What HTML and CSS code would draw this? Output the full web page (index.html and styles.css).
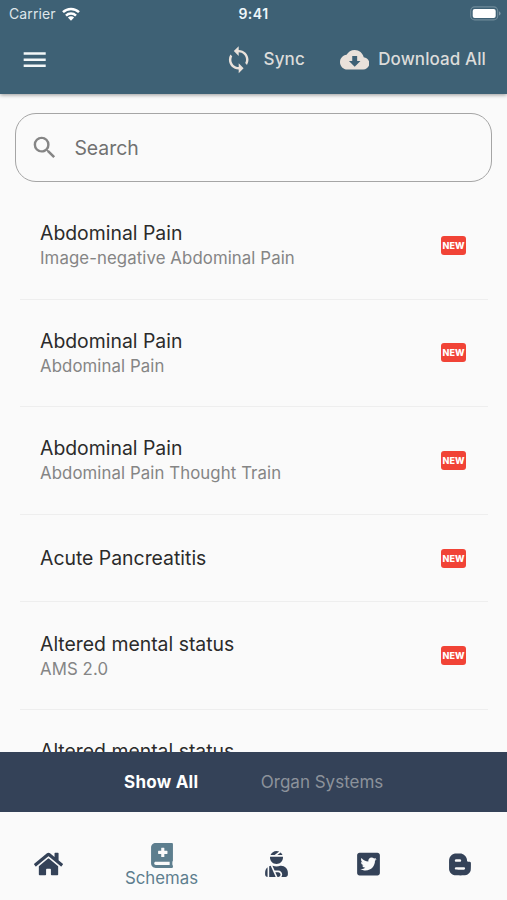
FILE: index.html
```html
<!DOCTYPE html>
<html lang="en">
<head>
<meta charset="utf-8">
<title>Schemas</title>
<link rel="stylesheet" href="styles.css">
</head>
<body>
<div class="app">
  <header class="header">
    <div class="status">
      <div class="carrier"><span>Carrier</span>
        <svg class="wifi" viewBox="0 0 18 14"><g fill="none" stroke="#fff" stroke-width="2.5"><path d="M1 5.2a11.4 11.4 0 0 1 16 0"/><path d="M4 8.6a7.1 7.1 0 0 1 10 0"/></g><path fill="#fff" d="M5.9 10.5a4.4 4.4 0 0 1 6.2 0L9 13.7z"/></svg>
      </div>
      <span class="time">9:41</span>
      <svg class="battery" viewBox="0 0 31 15"><rect x=".7" y=".9" width="27" height="13" rx="4" fill="none" stroke="#6f8b9a" stroke-width="1.1"/><rect x="2.7" y="2.9" width="23" height="9" rx="2" fill="#fff"/><path d="M29 5.2q1.6.8 1.6 2.2T29 9.6z" fill="#7f98a6"/></svg>
    </div>
    <div class="toolbar">
      <svg class="icon menu" viewBox="0 0 24 24"><path d="M3 18h18v-2H3v2zm0-5h18v-2H3v2zm0-7v2h18V6H3z"/></svg>
      <div class="action sync">
        <svg class="icon" viewBox="0 0 24 24"><path d="M12 4V1L8 5l4 4V6c3.31 0 6 2.69 6 6 0 1.01-.25 1.97-.7 2.8l1.46 1.46A7.93 7.93 0 0 0 20 12c0-4.42-3.58-8-8-8zm0 14c-3.31 0-6-2.69-6-6 0-1.01.25-1.97.7-2.8L5.24 7.74A7.93 7.93 0 0 0 4 12c0 4.42 3.58 8 8 8v3l4-4-4-4v3z"/></svg>
        <span class="label">Sync</span>
      </div>
      <div class="action download">
        <svg class="icon" viewBox="0 0 24 24"><path d="M19.35 10.04C18.67 6.59 15.64 4 12 4 9.11 4 6.6 5.64 5.35 8.04 2.34 8.36 0 10.91 0 14c0 3.31 2.69 6 6 6h13c2.76 0 5-2.24 5-5 0-2.64-2.05-4.78-4.65-4.96zM16.7 13 12 17.7 7.3 13H10V9h4v4h2.7z"/></svg>
        <span class="label">Download All</span>
      </div>
    </div>
  </header>
  <main class="content">
    <div class="search">
      <svg class="icon" viewBox="0 0 24 24"><path d="M15.5 14h-.79l-.28-.27A6.47 6.47 0 0 0 16 9.5 6.5 6.5 0 1 0 9.5 16c1.61 0 3.09-.59 4.23-1.57l.27.28v.79l5 4.99L20.49 19l-4.99-5zm-6 0C7.01 14 5 11.99 5 9.5S7.01 5 9.5 5 14 7.01 14 9.5 11.99 14 9.5 14z"/></svg>
      <span>Search</span>
    </div>
    <ul class="list">
      <li class="row"><div><p class="title">Abdominal Pain</p><p class="sub">Image-negative Abdominal Pain</p></div><span class="new">NEW</span></li>
      <li class="row"><div><p class="title">Abdominal Pain</p><p class="sub">Abdominal Pain</p></div><span class="new">NEW</span></li>
      <li class="row"><div><p class="title">Abdominal Pain</p><p class="sub">Abdominal Pain Thought Train</p></div><span class="new">NEW</span></li>
      <li class="row single"><div><p class="title">Acute Pancreatitis</p></div><span class="new">NEW</span></li>
      <li class="row"><div><p class="title">Altered mental status</p><p class="sub">AMS 2.0</p></div><span class="new">NEW</span></li>
      <li class="row partial"><p class="title">Altered mental status</p></li>
    </ul>
  </main>
  <div class="tabs"><span class="tab active">Show All</span><span class="tab">Organ Systems</span></div>
  <nav class="nav">
    <div class="item"><svg class="home" viewBox="0 0 576 512"><path d="M280.37 148.26L96 300.11V464a16 16 0 0 0 16 16l112.06-.29a16 16 0 0 0 15.92-16V368a16 16 0 0 1 16-16h64a16 16 0 0 1 16 16v95.64a16 16 0 0 0 16 16.05L464 480a16 16 0 0 0 16-16V300L295.67 148.26a12.19 12.19 0 0 0-15.3 0zM571.6 251.47L488 182.56V44.05a12 12 0 0 0-12-12h-56a12 12 0 0 0-12 12v72.61L318.47 43a48 48 0 0 0-61 0L4.34 251.47a12 12 0 0 0-1.6 16.9l25.5 31A12 12 0 0 0 45.15 301l235.22-193.74a12.19 12.19 0 0 1 15.3 0L530.9 301a12 12 0 0 0 16.9-1.6l25.5-31a12 12 0 0 0-1.7-16.93z"/></svg></div>
    <div class="item current"><svg class="book" viewBox="0 0 448 512"><path d="M448 358.4V25.6c0-16-9.6-25.6-25.6-25.6H96C41.6 0 0 41.6 0 96v320c0 54.4 41.6 96 96 96h326.4c12.8 0 25.6-9.6 25.6-25.6v-16q0-9.6-9.6-19.2c-3.2-16-3.2-60.8 0-73.6q9.6-6.4 9.6-19.2zM144 168a8 8 0 0 1 8-8h56v-56a8 8 0 0 1 8-8h48a8 8 0 0 1 8 8v56h56a8 8 0 0 1 8 8v48a8 8 0 0 1-8 8h-56v56a8 8 0 0 1-8 8h-48a8 8 0 0 1-8-8v-56h-56a8 8 0 0 1-8-8zm236.8 280H96c-16 0-32-12.8-32-32s12.8-32 32-32h284.8z"/></svg><span>Schemas</span></div>
    <div class="item"><svg class="injured" viewBox="0 0 448 512"><path d="M277.37 11.98C261.08 4.47 243.11 0 224 0c-53.69 0-99.5 33.13-118.51 80h81.19l90.69-68.02zM342.51 80c-7.9-19.47-20.67-36.2-36.49-49.52L239.99 80h102.52zM224 256c70.69 0 128-57.31 128-128 0-5.48-.95-10.7-1.61-16H97.61c-.67 5.3-1.61 10.52-1.61 16 0 70.69 57.31 128 128 128zM80 299.7V512h128.26l-98.45-221.52A132.835 132.835 0 0 0 80 299.7zM0 464c0 26.51 21.49 48 48 48V320.24C18.88 344.89 0 381.26 0 422.4V464zm256-48h-55.38l42.67 96H256c26.47 0 48-21.53 48-48s-21.53-48-48-48zm57.6-128h-16.71c-22.24 10.18-46.88 16-72.89 16s-50.65-5.82-72.89-16h-7.37l42.67 96H256c44.11 0 80 35.89 80 80 0 18.08-6.26 34.59-16.41 48H400c26.51 0 48-21.49 48-48v-41.6c0-74.23-60.17-134.4-134.4-134.4z"/></svg></div>
    <div class="item"><svg class="bird" viewBox="0 0 448 512"><path d="M400 32H48C21.5 32 0 53.5 0 80v352c0 26.5 21.5 48 48 48h352c26.5 0 48-21.5 48-48V80c0-26.5-21.5-48-48-48zm-48.9 158.8c.2 2.8.2 5.7.2 8.5 0 86.7-66 186.6-186.6 186.6-37.2 0-71.7-10.8-100.7-29.4 5.3.6 10.4.8 15.8.8 30.7 0 58.9-10.4 81.4-28-28.8-.6-53-19.5-61.3-45.5 10.1 1.5 19.2 1.5 29.6-1.2-30-6.1-52.5-32.5-52.5-64.4v-.8c8.7 4.9 18.9 7.9 29.6 8.3a65.447 65.447 0 0 1-29.2-54.6c0-12.2 3.2-23.4 8.9-33.1 32.3 39.8 80.8 65.8 135.2 68.6-9.3-44.5 24-80.6 64-80.6 18.9 0 35.9 7.9 47.9 20.7 14.8-2.8 29-8.3 41.6-15.8-4.9 15.2-15.2 28-28.8 36.1 13.2-1.4 26-5.1 37.8-10.2-8.9 13.1-20.1 24.7-32.9 34z"/></svg></div>
    <div class="item"><svg class="blog" viewBox="0 0 448 512"><path d="M446.6 222.7c-1.8-8-6.8-15.4-12.5-18.5-1.8-1-13-2.2-25-2.7-20.1-.9-22.3-1.3-28.7-5-10.1-5.9-12.8-12.3-12.9-29.5-.1-33-13.8-63.7-40.9-91.3-19.3-19.7-40.9-33-65.5-40.5-5.9-1.8-19.1-2.4-63.3-2.9-69.4-.8-84.8.6-108.4 10C45.9 59.5 14.7 96.1 3.3 142.9 1.2 151.7.7 165.8.2 246.8c-.6 101.5.1 116.4 6.4 136.5 15.6 49.6 59.9 86.3 104.4 94.3 14.8 2.7 197.3 3.3 216 .8 32.5-4.4 58-17.5 81.9-41.9 17.3-17.7 28.1-36.8 35.2-62.1 4.9-17.6 4.5-142.8 2.5-151.7zm-322.1-63.6c7.8-7.9 10-8.2 58.8-8.2 43.9 0 45.4.1 51.8 3.4 9.3 4.7 13.4 11.3 13.4 21.9 0 9.5-3.8 16.2-12.3 21.6-4.6 2.9-7.3 3.1-50.3 3.3-26.5.2-47.7-.4-50.8-1.2-16.6-4.7-22.8-28.5-10.6-40.8zm191.8 199.8l-14.9 2.4-77.5.9c-68.1.8-87.3-.4-90.9-2-7.1-3.1-13.8-11.7-14.9-19.4-1.1-7.3 2.6-17.3 8.2-22.4 7.1-6.4 10.2-6.6 97.3-6.7 89.6-.1 89.1-.1 97.6 7.8 12.1 11.3 9.5 31.2-4.9 39.4z"/></svg></div>
  </nav>
</div>
</body>
</html>
```
FILE: styles.css
```css
* { box-sizing: border-box; margin: 0; padding: 0; }
body { font-family: Inter, "Liberation Sans", sans-serif; background: #fafafa; }
svg { display: block; flex: none; }
.app { display: flex; flex-direction: column; width: 507px; height: 900px; overflow: hidden; }
.header { position: relative; flex: none; height: 94px; background: #3e6175; box-shadow: 0 1px 4px rgba(0,0,0,.4); }
.status { display: grid; grid-template-columns: 1fr auto 1fr; align-items: center; height: 26px; padding: 1px 6px 0 9px; }
.carrier { display: flex; align-items: center; gap: 6px; font-size: 14px; letter-spacing: .1px; color: #dfe6ea; }
.wifi { width: 18px; height: 14px; }
.time { margin-right: 3px; font-size: 14px; font-weight: 600; letter-spacing: .5px; color: #eef7fb; }
.battery { width: 31px; height: 15px; justify-self: end; }
.toolbar { display: flex; align-items: center; height: 67px; padding: 0 21px 0 20px; }
.icon { width: 29.4px; height: 29.4px; fill: #e9e1da; }
.icon.menu { fill: #f3f7f8; margin-right: auto; }
.action { display: flex; align-items: center; }
.sync { gap: 10px; margin-right: 35px; }
.download { gap: 9px; }
.label { font-size: 17px; font-weight: 500; letter-spacing: .1px; color: #dcdcda; }
.content { flex: 1; min-height: 0; overflow: hidden; padding: 19px 15px 0 15px; }
.search { display: flex; align-items: center; gap: 15px; height: 69px; padding-left: 14px; border: 1.5px solid #a5a5a5; border-radius: 21px; font-size: 19.4px; color: #717171; }
.search .icon { fill: #858585; }
.list { list-style: none; padding: 10px 4px 0 5px; }
.row { display: flex; align-items: center; justify-content: space-between; height: 107.6px; padding: 0 22px 0 20px; border-bottom: 1px solid #eee; }
.row.single { height: 87.6px; }
.row.partial { height: auto; padding-top: 28px; border: 0; }
.title { font-size: 19.4px; line-height: 26px; color: #2b2b2b; }
.sub { font-size: 16.8px; line-height: 24px; letter-spacing: .09px; color: #858585; }
.new { width: 25px; height: 19px; border-radius: 3px; background: #f14336; color: #fff; font-size: 9px; font-weight: 800; line-height: 19px; text-align: center; }
.tabs { flex: none; display: flex; gap: 62.5px; height: 60px; padding-left: 124px; align-items: center; background: #344258; }
.tab { font-size: 17px; color: #8c929b; }
.tab.active { font-weight: 700; letter-spacing: .25px; color: #fff; }
.nav { flex: none; display: grid; grid-template-columns: 97px 129px 101px 83px 100px; height: 88px; padding-top: 16px; }
.item { display: flex; flex-direction: column; align-items: center; justify-content: center; fill: #344258; }
.current { padding-top: 3px; fill: #5d7e8e; color: #5d7e8e; font-size: 16.8px; line-height: 20px; }
.home { width: 29px; height: 26px; }
.book { width: 22px; height: 25px; }
.injured { width: 23px; height: 26px; }
.bird { width: 23px; height: 26px; }
.blog { width: 22px; height: 25px; margin-top: 1px; }
```
